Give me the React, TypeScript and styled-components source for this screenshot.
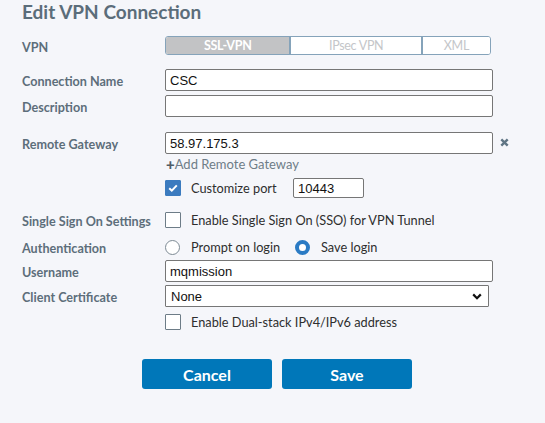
import React from "react";
import styled, { createGlobalStyle } from "styled-components";

const GlobalStyle = createGlobalStyle`
  html, body {
    margin: 0;
    padding: 0;
    background: #f5f6fa;
  }
  body {
    font-family: Lato, "Open Sans", sans-serif;
  }
`;

const Page = styled.div`
  width: 545px;
  height: 423px;
  box-sizing: border-box;
  padding-left: 22px;
  background: #f5f6fa;
  overflow: hidden;
`;

const Title = styled.h1`
  margin: 0;
  height: 24px;
  font-family: Lato, sans-serif;
  font-weight: 700;
  font-size: 19px;
  line-height: 24px;
  color: #5b6d7a;
`;

const Row = styled.div<{ $mt: number; $h: number }>`
  display: grid;
  grid-template-columns: 143px auto;
  align-items: center;
  margin-top: ${(p) => p.$mt}px;
  height: ${(p) => p.$h}px;
`;

const Label = styled.div`
  font-family: Lato, sans-serif;
  font-weight: 700;
  font-size: 12.6px;
  line-height: 14px;
  color: #5d6e7a;
  padding-top: 4px;
  white-space: nowrap;
`;

const Control = styled.div`
  display: flex;
  align-items: center;
  height: 100%;
`;

const Segmented = styled.div`
  display: flex;
  width: 326px;
  height: 19px;
  box-sizing: border-box;
  border: 1px solid #85a3ba;
  border-radius: 3px;
  overflow: hidden;
  background: #ffffff;
`;

const Segment = styled.div<{ $w: number; $active?: boolean }>`
  width: ${(p) => p.$w}px;
  display: flex;
  align-items: center;
  justify-content: center;
  font-family: Lato, sans-serif;
  font-weight: ${(p) => (p.$active ? 700 : 400)};
  font-size: 12.5px;
  letter-spacing: -0.3px;
  color: ${(p) => (p.$active ? "#ffffff" : "#c4c6c9")};
  background: ${(p) => (p.$active ? "#c2c3c5" : "#ffffff")};
  & + & {
    border-left: 2px solid #85a3ba;
  }
`;

const TextInput = styled.div<{ $w: number }>`
  width: ${(p) => p.$w}px;
  height: 22px;
  box-sizing: border-box;
  border: 1px solid #767676;
  border-radius: 2px;
  background: #ffffff;
  padding: 0 4px;
  display: flex;
  align-items: center;
  font-family: "Liberation Sans", Arial, sans-serif;
  font-size: 13px;
  color: #111111;
`;

const PortInput = styled(TextInput)`
  height: 20px;
  width: 71px;
`;

const SelectBox = styled.div`
  width: 324px;
  height: 22px;
  box-sizing: border-box;
  border: 1px solid #767676;
  border-radius: 1px;
  background: #ffffff;
  padding: 0 6px 0 5px;
  display: flex;
  align-items: center;
  justify-content: space-between;
  font-family: "Liberation Sans", Arial, sans-serif;
  font-size: 13px;
  color: #111111;
`;

const RemoveButton = styled.span`
  display: inline-flex;
  margin-left: 7px;
  margin-top: -2px;
`;

const AddLink = styled.div`
  display: flex;
  align-items: center;
  font-family: Lato, sans-serif;
  font-size: 13px;
  color: #6e7d88;
  padding-left: 1px;
  padding-top: 1px;
`;

const Plus = styled.span`
  font-weight: 900;
  color: #4f5c66;
  font-size: 15px;
  line-height: 13px;
`;

const Box = styled.span<{ $checked?: boolean }>`
  width: 16px;
  height: 16px;
  box-sizing: border-box;
  flex: none;
  display: inline-flex;
  align-items: center;
  justify-content: center;
  border: 1px solid ${(p) => (p.$checked ? "#3b7bbf" : "#6d7c87")};
  background: ${(p) => (p.$checked ? "#3b7bbf" : "#ffffff")};
  border-radius: 1px;
`;

const Radio = styled.span<{ $checked?: boolean }>`
  width: 15px;
  height: 15px;
  box-sizing: border-box;
  flex: none;
  border-radius: 50%;
  border: ${(p) => (p.$checked ? "4px solid #2b7bc4" : "1px solid #7d8a94")};
  background: #ffffff;
`;

const OptionText = styled.span<{ $w?: number; $gap?: number }>`
  font-family: Lato, sans-serif;
  font-size: 12.75px;
  color: #2e2e2e;
  margin-left: ${(p) => p.$gap ?? 10}px;
  white-space: nowrap;
  ${(p) => (p.$w ? `width: ${p.$w}px;` : "")}
`;

const RadioOption = styled.span<{ $w?: number }>`
  display: inline-flex;
  align-items: center;
  ${(p) => (p.$w ? `width: ${p.$w}px;` : "")}
`;

const Actions = styled.div`
  display: flex;
  gap: 10px;
  margin-top: 29px;
  margin-left: 120px;
`;

const Button = styled.button`
  width: 130px;
  height: 30px;
  border: none;
  border-radius: 3px;
  background: #0077b9;
  color: #ffffff;
  font-family: Lato, sans-serif;
  font-weight: 700;
  font-size: 16px;
  padding: 0;
  cursor: pointer;
`;

const CheckMark = () => (
  <svg width="10" height="8" viewBox="0 0 10 8">
    <path d="M1.2 4.2 L3.8 6.6 L8.8 1.4" fill="none" stroke="#ffffff" strokeWidth="2" />
  </svg>
);

const CloseIcon = () => (
  <svg width="9" height="9" viewBox="0 0 9 9">
    <path d="M1.3 1.3 L7.7 7.7 M7.7 1.3 L1.3 7.7" stroke="#5f7584" strokeWidth="2.4" strokeLinecap="butt" />
  </svg>
);

const Chevron = () => (
  <svg width="10" height="7" viewBox="0 0 10 7">
    <path d="M1.2 1.4 L5 5.2 L8.8 1.4" fill="none" stroke="#111111" strokeWidth="2.2" />
  </svg>
);

export default function App() {
  return (
    <>
      <GlobalStyle />
      <Page>
        <Title>Edit VPN Connection</Title>

        <Row $mt={12} $h={19}>
          <Label>VPN</Label>
          <Control>
            <Segmented>
              <Segment $w={125} $active>SSL-VPN</Segment>
              <Segment $w={131}>IPsec VPN</Segment>
              <Segment $w={68}>XML</Segment>
            </Segmented>
          </Control>
        </Row>

        <Row $mt={14} $h={22}>
          <Label>Connection Name</Label>
          <Control>
            <TextInput $w={328}>CSC</TextInput>
          </Control>
        </Row>

        <Row $mt={4} $h={22}>
          <Label>Description</Label>
          <Control>
            <TextInput $w={328} />
          </Control>
        </Row>

        <Row $mt={15} $h={22}>
          <Label>Remote Gateway</Label>
          <Control>
            <TextInput $w={328}>58.97.175.3</TextInput>
            <RemoveButton>
              <CloseIcon />
            </RemoveButton>
          </Control>
        </Row>

        <Row $mt={1} $h={16}>
          <span />
          <AddLink>
            <Plus>+</Plus>Add Remote Gateway
          </AddLink>
        </Row>

        <Row $mt={7} $h={20}>
          <span />
          <Control>
            <Box $checked>
              <CheckMark />
            </Box>
            <OptionText $w={102}>Customize port</OptionText>
            <PortInput $w={71}>10443</PortInput>
          </Control>
        </Row>

        <Row $mt={12} $h={19}>
          <Label>Single Sign On Settings</Label>
          <Control>
            <Box />
            <OptionText>Enable Single Sign On (SSO) for VPN Tunnel</OptionText>
          </Control>
        </Row>

        <Row $mt={9} $h={15}>
          <Label>Authentication</Label>
          <Control>
            <RadioOption $w={130}>
              <Radio />
              <OptionText $gap={11}>Prompt on login</OptionText>
            </RadioOption>
            <RadioOption>
              <Radio $checked />
              <OptionText $gap={11}>Save login</OptionText>
            </RadioOption>
          </Control>
        </Row>

        <Row $mt={7} $h={22}>
          <Label>Username</Label>
          <Control>
            <TextInput $w={328}>mqmission</TextInput>
          </Control>
        </Row>

        <Row $mt={3} $h={22}>
          <Label>Client Certificate</Label>
          <Control>
            <SelectBox>
              <span>None</span>
              <Chevron />
            </SelectBox>
          </Control>
        </Row>

        <Row $mt={7} $h={16}>
          <span />
          <Control>
            <Box />
            <OptionText>Enable Dual-stack IPv4/IPv6 address</OptionText>
          </Control>
        </Row>

        <Actions>
          <Button>Cancel</Button>
          <Button>Save</Button>
        </Actions>
      </Page>
    </>
  );
}
